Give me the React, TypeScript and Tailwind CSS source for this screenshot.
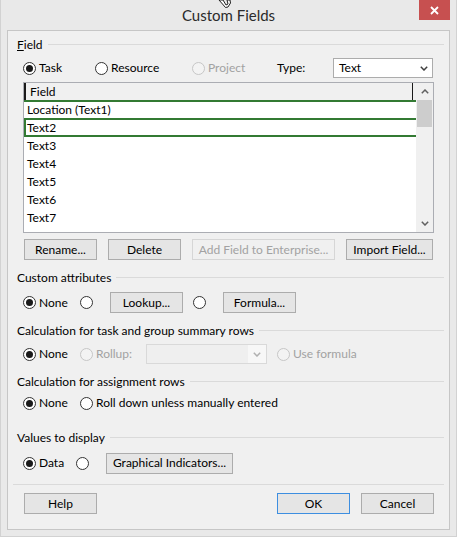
import type { ReactNode } from "react";

function Radio({ checked = false, disabled = false }: { checked?: boolean; disabled?: boolean }) {
  return (
    <span
      className={`flex h-[13px] w-[13px] shrink-0 items-center justify-center rounded-full border ${
        disabled ? "border-[#c6c6c6] bg-[#f3f3f3]" : "border-[#333333] bg-white"
      }`}
    >
      {checked && <span className="h-[7px] w-[7px] rounded-full bg-[#1a1a1a]" />}
    </span>
  );
}

function Option({
  label,
  checked,
  disabled,
  className = "",
}: {
  label: string;
  checked?: boolean;
  disabled?: boolean;
  className?: string;
}) {
  return (
    <div className={`flex shrink-0 items-center gap-[3px] ${className}`}>
      <Radio checked={checked} disabled={disabled} />
      <span className={`whitespace-nowrap ${disabled ? "text-[#a2a2a2]" : "text-black"}`}>{label}</span>
    </div>
  );
}

function Button({
  children,
  className = "",
  disabled = false,
  primary = false,
}: {
  children: ReactNode;
  className?: string;
  disabled?: boolean;
  primary?: boolean;
}) {
  const look = disabled
    ? "border-[#d6d6d6] bg-[#f0f0f0] text-[#a2a2a2]"
    : primary
      ? "border-[#3d8ee0] bg-[#e5e5e5] text-black"
      : "border-[#acacac] bg-[#e5e5e5] text-black";
  return (
    <div className={`flex h-[21px] shrink-0 items-center justify-center border whitespace-nowrap ${look} ${className}`}>
      {children}
    </div>
  );
}

function Chevron({ up = false, color = "#404040" }: { up?: boolean; color?: string }) {
  return (
    <svg width="8" height="5" viewBox="0 0 8 5" className="shrink-0">
      <path
        d={up ? "M0.8 4.2 L4 1 L7.2 4.2" : "M0.8 0.8 L4 4 L7.2 0.8"}
        fill="none"
        stroke={color}
        strokeWidth="1.5"
      />
    </svg>
  );
}

function Section({ children, className = "" }: { children: ReactNode; className?: string }) {
  return (
    <div className={`ml-[4px] flex h-[16px] items-center gap-[5px] ${className}`}>
      <span className="whitespace-nowrap text-black">{children}</span>
      <span className="mb-[2px] h-px flex-1 bg-[#dadada]" />
    </div>
  );
}

const rows = ["Text3", "Text4", "Text5", "Text6", "Text7", "Text8"];

export default function App() {
  return (
    <div className="relative h-[537px] w-[457px] overflow-hidden border-x border-b border-[#d2d2d2] bg-[#e9e9e9] font-['Lato','Noto_Sans',sans-serif] text-[12px] leading-[16px]">
      {/* title bar */}
      <div className="relative flex h-[30px] items-center justify-center pb-[1px]">
        <span className="text-[15px] text-[#2b2b2b]">Custom Fields</span>
        <div className="absolute right-[6px] top-0 flex h-[20px] w-[31px] items-center justify-center bg-[#c75050]">
          <svg width="9" height="9" viewBox="0 0 9 9">
            <path d="M1 1 L8 8 M8 1 L1 8" stroke="white" strokeWidth="1.8" />
          </svg>
        </div>
        {/* mouse pointer tail */}
        <svg className="absolute left-[217px] top-0" width="14" height="8" viewBox="0 0 14 8">
          <path d="M1 0 L5 0 L8 5 L10 4 L9 0 L12 0 L12.5 3 L10 7 L7.5 7.5 Z" fill="white" stroke="#222" strokeWidth="1" />
        </svg>
      </div>

      {/* dialog body */}
      <div className="mx-[6px] flex h-[500px] flex-col border border-[#c6c6c6] bg-[#f0f0f0] px-[5px]">
        <Section className="mt-[6px]">
          <span className="underline">F</span>ield
        </Section>

        <div className="ml-[10px] mt-[5px] flex h-[20px] items-center">
          <Option label="Task" checked className="w-[72px]" />
          <Option label="Resource" className="w-[97px]" />
          <Option label="Project" disabled className="w-[85px]" />
          <span className="w-[56px]">Type:</span>
          <div className="flex h-[20px] w-[100px] items-center justify-between border border-[#acacac] bg-white pl-[5px] pr-[4px]">
            <span>Text</span>
            <Chevron />
          </div>
        </div>

        {/* field list */}
        <div className="mx-[10px] mt-[4px] flex h-[151px] border border-[#abadb3] bg-white">
          <div className="flex flex-1 flex-col overflow-hidden">
            <div className="flex h-[17px] shrink-0 items-center border-l-2 border-[#1a1a1a] bg-[#f0f0f0]">
              <span className="flex-1 pl-[4px]">Field</span>
              <span className="mr-[3px] h-full w-px bg-[#1a1a1a]" />
            </div>
            <div className="flex h-[18px] shrink-0 items-center border-t-2 border-[#337a33] pl-[3px]">
              Location (Text1)
            </div>
            <div className="flex h-[19px] shrink-0 items-center border-y-2 border-l-2 border-[#337a33] pl-[1px]">
              Text2
            </div>
            {rows.map((r) => (
              <div key={r} className="flex h-[18px] shrink-0 items-center pl-[3px]">
                {r}
              </div>
            ))}
          </div>
          <div className="flex w-[17px] flex-col bg-[#f0f0f0]">
            <div className="flex h-[17px] items-center justify-center">
              <Chevron up color="#606060" />
            </div>
            <div className="mx-px h-[27px] bg-[#cdcdcd]" />
            <div className="flex-1" />
            <div className="flex h-[17px] items-center justify-center">
              <Chevron color="#606060" />
            </div>
          </div>
        </div>

        <div className="ml-[11px] mt-[6px] flex gap-[11px]">
          <Button className="w-[73px]">Rename...</Button>
          <Button className="w-[73px]">Delete</Button>
          <Button className="w-[143px]" disabled>
            Add Field to Enterprise...
          </Button>
          <Button className="w-[87px]">Import Field...</Button>
        </div>

        <Section className="mt-[10px]">Custom attributes</Section>
        <div className="ml-[10px] mt-[6px] flex h-[21px] items-center">
          <Option label="None" checked className="w-[57px]" />
          <Radio />
          <Button className="ml-[17px] w-[73px]">Lookup...</Button>
          <span className="ml-[10px]">
            <Radio />
          </span>
          <Button className="ml-[17px] w-[73px]">Formula...</Button>
        </div>

        <Section className="mt-[10px]">Calculation for task and group summary rows</Section>
        <div className="ml-[10px] mt-[5px] flex h-[20px] items-center">
          <Option label="None" checked className="w-[57px]" />
          <Option label="Rollup:" disabled className="w-[66px]" />
          <div className="flex h-[20px] w-[121px] border border-[#d9d9d9] bg-[#efefef]">
            <div className="flex-1" />
            <div className="flex w-[18px] items-center justify-center bg-[#f7f7f7]">
              <Chevron color="#b0b0b0" />
            </div>
          </div>
          <Option label="Use formula" disabled className="ml-[10px]" />
        </div>

        <Section className="mt-[10px]">Calculation for assignment rows</Section>
        <div className="ml-[10px] mt-[3px] flex h-[20px] items-center">
          <Option label="None" checked className="w-[57px]" />
          <Option label="Roll down unless manually entered" />
        </div>

        <Section className="mt-[17px]">Values to display</Section>
        <div className="ml-[10px] mt-[7px] flex h-[20px] items-center">
          <Option label="Data" checked className="w-[53px]" />
          <Radio />
          <Button className="ml-[17px] w-[127px]">Graphical Indicators...</Button>
        </div>

        <div className="mt-[11px] h-px bg-[#dadada]" />

        <div className="ml-[11px] mr-[10px] mt-[8px] flex items-center">
          <Button className="w-[73px]">Help</Button>
          <div className="flex-1" />
          <Button className="w-[73px]" primary>
            OK
          </Button>
          <Button className="ml-[11px] w-[73px]">Cancel</Button>
        </div>
      </div>
    </div>
  );
}
